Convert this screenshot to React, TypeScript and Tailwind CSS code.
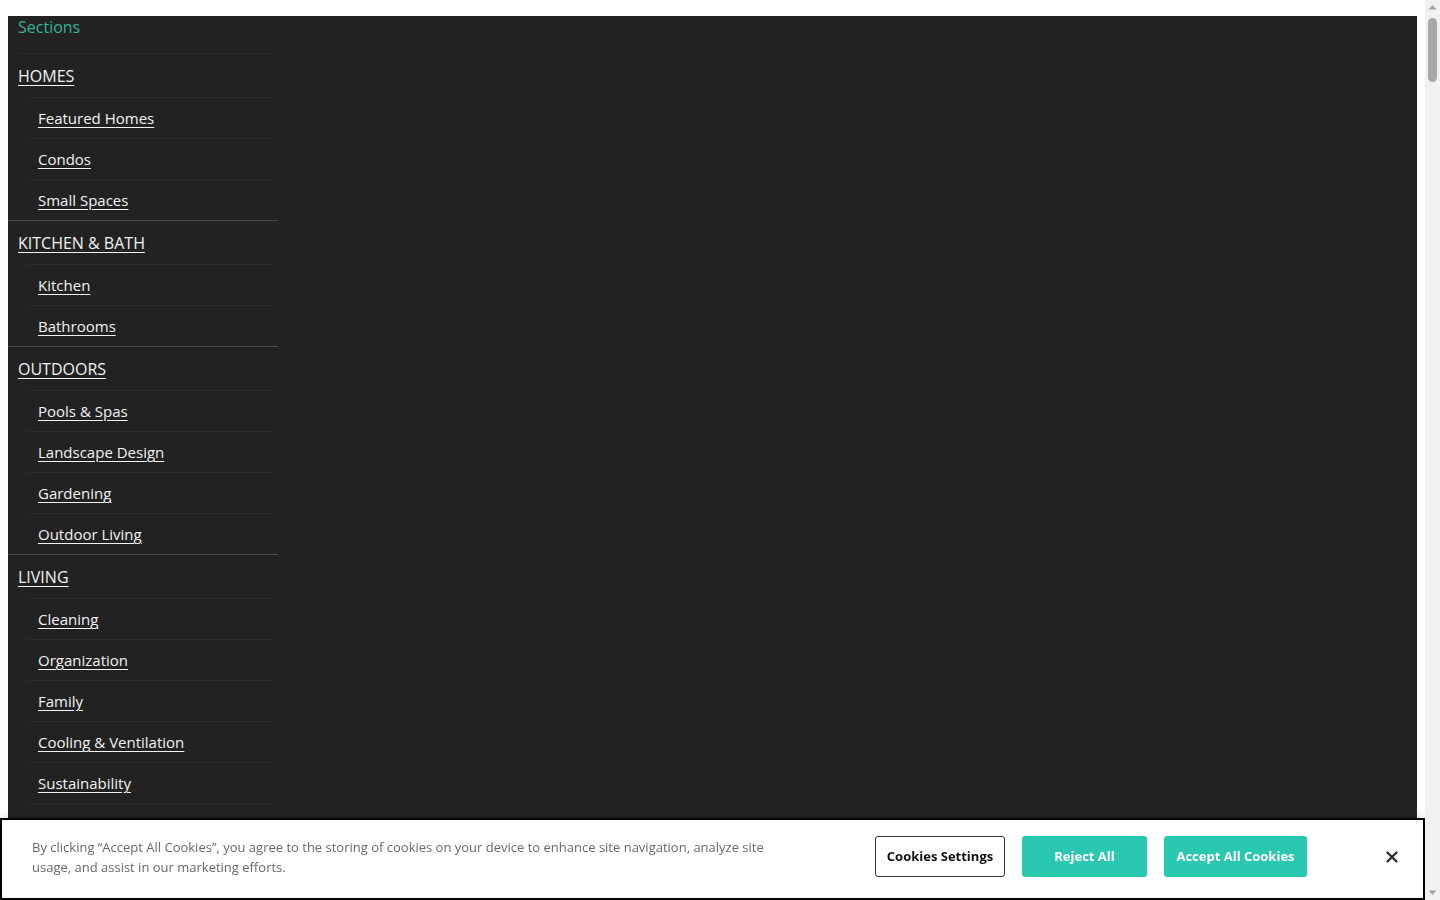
import { X } from 'lucide-react';

type Group = { title: string; items: string[] };

const groups: Group[] = [
  { title: 'HOMES', items: ['Featured Homes', 'Condos', 'Small Spaces'] },
  { title: 'KITCHEN & BATH', items: ['Kitchen', 'Bathrooms'] },
  { title: 'OUTDOORS', items: ['Pools & Spas', 'Landscape Design', 'Gardening', 'Outdoor Living'] },
  {
    title: 'LIVING',
    items: ['Cleaning', 'Organization', 'Family', 'Cooling & Ventilation', 'Sustainability', 'Pets'],
  },
  { title: 'DESIGN', items: ['Decorating', 'Architecture', 'Furniture', 'Lighting'] },
  { title: 'REMODELING', items: ['Renovation', 'Flooring', 'Windows & Doors'] },
];

// browser scrollbar, as seen in the screenshot
function Scrollbar() {
  return (
    <div className="fixed top-0 right-0 bottom-0 z-20 w-[15px] bg-[#f1f1f1] flex flex-col items-center">
      <svg width="15" height="15" viewBox="0 0 15 15" className="shrink-0">
        <path d="M3.5 9.5 L7.5 5 L11.5 9.5 Z" fill="#a3a3a3" />
      </svg>
      <div className="mt-[3px] h-[64px] w-[9px] rounded-full bg-[#a8a8a8]" />
      <svg width="15" height="15" viewBox="0 0 15 15" className="mt-auto shrink-0">
        <path d="M3.5 5.5 L7.5 10 L11.5 5.5 Z" fill="#a3a3a3" />
      </svg>
    </div>
  );
}

function CookieBanner() {
  return (
    <div className="fixed bottom-0 left-0 right-[15px] z-10 bg-white border-2 border-black h-[82px] flex items-center pb-[5px] pl-[30px] pr-[22px] shadow-[0_-2px_8px_rgba(0,0,0,0.12)]">
      <p className="w-[740px] text-[13px] leading-[20px] text-[#696969]">
        By clicking “Accept All Cookies”, you agree to the storing of cookies on your device to enhance site navigation,
        analyze site usage, and assist in our marketing efforts.
      </p>
      <div className="ml-auto flex items-center gap-[17px]">
        <button className="h-[41px] w-[130px] rounded-[3px] border border-[#333] bg-white text-[13px] font-bold text-[#111]">
          Cookies Settings
        </button>
        <button className="h-[41px] w-[125px] rounded-[3px] bg-[#2ac7b1] text-[13px] font-bold text-white">
          Reject All
        </button>
        <button className="h-[41px] w-[143px] rounded-[3px] bg-[#2ac7b1] text-[13px] font-bold text-white">
          Accept All Cookies
        </button>
      </div>
      <button className="ml-[76px] text-[#333]" aria-label="Close">
        <X className="h-[18px] w-[18px]" strokeWidth={3.2} />
      </button>
    </div>
  );
}

export default function App() {
  return (
    <div className="bg-white pt-2 pb-2 pl-2 pr-[23px] font-['Open_Sans',sans-serif]">
      <div className="mt-2 min-h-[12200px] bg-[#222222]">
        <ul className="w-[270px]">
          <li className="ml-[10px] mr-[6px] border-b border-[#2b2b2b] pb-[15px] leading-[22px] text-[16px] text-[#2fb29c]">
            Sections
          </li>
          {groups.map((group) => (
            <li key={group.title} className="border-b border-[#4b4b4b]">
              <a href="#" className="block px-[10px] pt-[11px] pb-[10px] text-[16px] leading-[22px] text-[#f2f2f2] underline underline-offset-[3px]">
                {group.title}
              </a>
              <ul className="ml-[20px] mr-[6px]">
                {group.items.map((item) => (
                  <li key={item} className="border-t border-[#2b2b2b] px-[10px] py-[10px] text-[15px] leading-[20px]">
                    <a href="#" className="text-[#f2f2f2] underline underline-offset-[3px]">
                      {item}
                    </a>
                  </li>
                ))}
              </ul>
            </li>
          ))}
        </ul>
      </div>
      <CookieBanner />
      <Scrollbar />
    </div>
  );
}
